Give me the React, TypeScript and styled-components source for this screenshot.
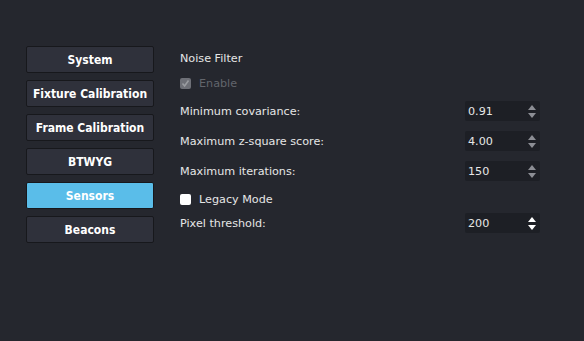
import styled, { createGlobalStyle } from 'styled-components'

const GlobalStyle = createGlobalStyle`
  html, body {
    margin: 0;
    padding: 0;
    background-color: #25272e;
  }
  body {
    font-family: 'DejaVu Sans', Verdana, sans-serif;
    font-size: 11.2px;
    color: #e6e6e6;
  }
`

const Page = styled.div`
  display: flex;
  align-items: flex-start;
  gap: 26px;
  width: 584px;
  height: 341px;
  box-sizing: border-box;
  padding: 46px 0 0 26px;
  background-color: #25272e;
`

const Nav = styled.div`
  display: flex;
  flex-direction: column;
  gap: 7px;
  width: 128px;
`

const NavButton = styled.button<{ $active?: boolean }>`
  height: 27px;
  box-sizing: border-box;
  border: 1px solid #17181c;
  border-radius: 2px;
  background-color: ${p => (p.$active ? '#5abde9' : '#2f313b')};
  color: #fff;
  font-family: 'DejaVu Sans Condensed', 'DejaVu Sans', sans-serif;
  font-weight: 700;
  font-size: 12px;
  padding: 1px 0 0;
  cursor: pointer;
`

const Panel = styled.div`
  display: flex;
  flex-direction: column;
  width: 360px;
`

const Row = styled.div<{ $top?: number }>`
  display: flex;
  align-items: center;
  justify-content: space-between;
  height: 20px;
  margin-top: ${p => p.$top ?? 0}px;
`

const Label = styled.span<{ $disabled?: boolean }>`
  color: ${p => (p.$disabled ? '#62656c' : '#e6e6e6')};
`

const CheckLabel = styled.label`
  display: flex;
  align-items: center;
  gap: 8px;
`

const Box = styled.span<{ $disabled?: boolean }>`
  display: flex;
  align-items: center;
  justify-content: center;
  width: 11px;
  height: 11px;
  border-radius: 2px;
  background-color: ${p => (p.$disabled ? '#6e7077' : '#ffffff')};
`

const Spin = styled.div`
  display: flex;
  align-items: center;
  justify-content: space-between;
  width: 75px;
  height: 20px;
  box-sizing: border-box;
  padding: 0 4px 0 3px;
  border-radius: 2px;
  background-color: #1d1f25;
  color: #e6e6e6;
`

const Arrows = ({ bright }: { bright?: boolean }) => {
  const c = bright ? '#ffffff' : '#8c8e94'
  return (
    <svg width="8" height="13" viewBox="0 0 8 13">
      <polygon points="4,0 8,5 0,5" fill={c} />
      <polygon points="0,8 8,8 4,13" fill={c} />
    </svg>
  )
}

const SpinBox = ({ value, bright }: { value: string; bright?: boolean }) => (
  <Spin>
    <span>{value}</span>
    <Arrows bright={bright} />
  </Spin>
)

const items = ['System', 'Fixture Calibration', 'Frame Calibration', 'BTWYG', 'Sensors', 'Beacons']

export default function App() {
  return (
    <>
      <GlobalStyle />
      <Page>
        <Nav>
          {items.map(i => (
            <NavButton key={i} $active={i === 'Sensors'}>{i}</NavButton>
          ))}
        </Nav>
        <Panel>
          <Row $top={2}>
            <Label>Noise Filter</Label>
          </Row>
          <Row $top={5}>
            <CheckLabel>
              <Box $disabled>
                <svg width="9" height="9" viewBox="0 0 9 9">
                  <path d="M1.5 4.5 L3.6 7 L7.5 1.5" stroke="#9a9ca1" strokeWidth="1.6" fill="none" />
                </svg>
              </Box>
              <Label $disabled>Enable</Label>
            </CheckLabel>
          </Row>
          <Row $top={8}>
            <Label>Minimum covariance:</Label>
            <SpinBox value="0.91" />
          </Row>
          <Row $top={10}>
            <Label>Maximum z-square score:</Label>
            <SpinBox value="4.00" />
          </Row>
          <Row $top={10}>
            <Label>Maximum iterations:</Label>
            <SpinBox value="150" />
          </Row>
          <Row $top={8}>
            <CheckLabel>
              <Box />
              <Label>Legacy Mode</Label>
            </CheckLabel>
          </Row>
          <Row $top={4}>
            <Label>Pixel threshold:</Label>
            <SpinBox value="200" bright />
          </Row>
        </Panel>
      </Page>
    </>
  )
}
